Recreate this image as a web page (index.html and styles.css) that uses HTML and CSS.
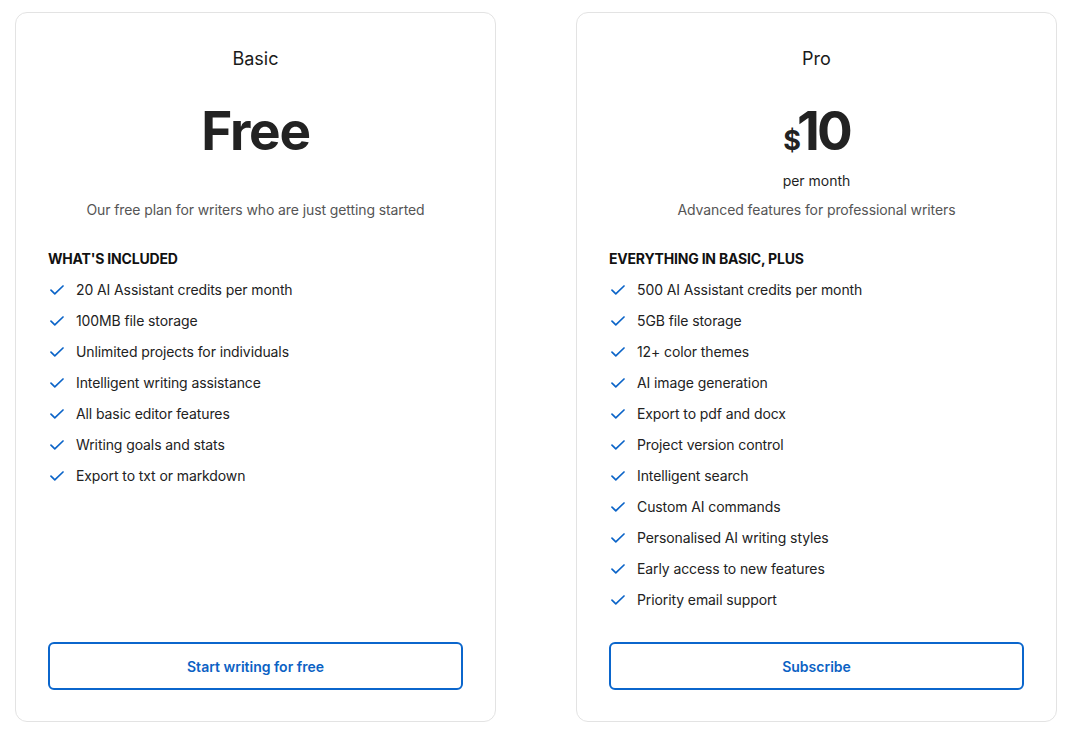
FILE: index.html
```html
<!DOCTYPE html>
<html lang="en">
<head>
<meta charset="utf-8">
<title>Pricing</title>
<link rel="stylesheet" href="styles.css">
</head>
<body>
<div class="plans">
  <section class="card">
    <h2 class="plan-name">Basic</h2>
    <div class="price-block">
      <div class="price"><span class="amount">Free</span></div>
    </div>
    <p class="desc">Our free plan for writers who are just getting started</p>
    <h3 class="list-title">WHAT'S INCLUDED</h3>
    <ul class="features">
      <li><svg class="check" viewBox="0 0 14 10"><path d="M1 5.2 L4.8 8.8 L13 1"/></svg>20 AI Assistant credits per month</li>
      <li><svg class="check" viewBox="0 0 14 10"><path d="M1 5.2 L4.8 8.8 L13 1"/></svg>100MB file storage</li>
      <li><svg class="check" viewBox="0 0 14 10"><path d="M1 5.2 L4.8 8.8 L13 1"/></svg>Unlimited projects for individuals</li>
      <li><svg class="check" viewBox="0 0 14 10"><path d="M1 5.2 L4.8 8.8 L13 1"/></svg>Intelligent writing assistance</li>
      <li><svg class="check" viewBox="0 0 14 10"><path d="M1 5.2 L4.8 8.8 L13 1"/></svg>All basic editor features</li>
      <li><svg class="check" viewBox="0 0 14 10"><path d="M1 5.2 L4.8 8.8 L13 1"/></svg>Writing goals and stats</li>
      <li><svg class="check" viewBox="0 0 14 10"><path d="M1 5.2 L4.8 8.8 L13 1"/></svg>Export to txt or markdown</li>
    </ul>
    <button class="btn">Start writing for free</button>
  </section>
  <section class="card">
    <h2 class="plan-name">Pro</h2>
    <div class="price-block">
      <div class="price"><span class="currency">$</span><span class="amount amount-num">10</span></div>
      <div class="period">per month</div>
    </div>
    <p class="desc">Advanced features for professional writers</p>
    <h3 class="list-title">EVERYTHING IN BASIC, PLUS</h3>
    <ul class="features">
      <li><svg class="check" viewBox="0 0 14 10"><path d="M1 5.2 L4.8 8.8 L13 1"/></svg>500 AI Assistant credits per month</li>
      <li><svg class="check" viewBox="0 0 14 10"><path d="M1 5.2 L4.8 8.8 L13 1"/></svg>5GB file storage</li>
      <li><svg class="check" viewBox="0 0 14 10"><path d="M1 5.2 L4.8 8.8 L13 1"/></svg>12+ color themes</li>
      <li><svg class="check" viewBox="0 0 14 10"><path d="M1 5.2 L4.8 8.8 L13 1"/></svg>AI image generation</li>
      <li><svg class="check" viewBox="0 0 14 10"><path d="M1 5.2 L4.8 8.8 L13 1"/></svg>Export to pdf and docx</li>
      <li><svg class="check" viewBox="0 0 14 10"><path d="M1 5.2 L4.8 8.8 L13 1"/></svg>Project version control</li>
      <li><svg class="check" viewBox="0 0 14 10"><path d="M1 5.2 L4.8 8.8 L13 1"/></svg>Intelligent search</li>
      <li><svg class="check" viewBox="0 0 14 10"><path d="M1 5.2 L4.8 8.8 L13 1"/></svg>Custom AI commands</li>
      <li><svg class="check" viewBox="0 0 14 10"><path d="M1 5.2 L4.8 8.8 L13 1"/></svg>Personalised AI writing styles</li>
      <li><svg class="check" viewBox="0 0 14 10"><path d="M1 5.2 L4.8 8.8 L13 1"/></svg>Early access to new features</li>
      <li><svg class="check" viewBox="0 0 14 10"><path d="M1 5.2 L4.8 8.8 L13 1"/></svg>Priority email support</li>
    </ul>
    <button class="btn">Subscribe</button>
  </section>
</div>
</body>
</html>
```
FILE: styles.css
```css
* { box-sizing: border-box; }
html, body { margin: 0; padding: 0; background: #fff; }
body {
  font-family: Inter, "Noto Sans", sans-serif;
  color: #1f1f1f;
  -webkit-font-smoothing: antialiased;
}
.plans {
  display: flex;
  gap: 80px;
  padding: 12px 0 0 15px;
}
.card {
  flex: 0 0 481px;
  height: 710px;
  border: 1px solid #e3e3e3;
  border-radius: 12px;
  padding: 34px 32px 31px;
  display: flex;
  flex-direction: column;
}
.plan-name {
  margin: 0;
  text-align: center;
  font-size: 18px;
  line-height: 24px;
  font-weight: 400;
  color: #1a1a1a;
}
.price-block {
  margin-top: 33px;
  height: 87px;
  text-align: center;
}
.price {
  height: 54px;
  line-height: 54px;
  display: flex;
  justify-content: center;
  align-items: baseline;
}
.amount {
  font-size: 53px;
  font-weight: 700;
  letter-spacing: -1.2px;
  color: #222;
}
.amount-num {
  letter-spacing: -3px;
}
.currency {
  font-size: 27px;
  font-weight: 700;
  color: #222;
  letter-spacing: -4px;
}
.period {
  margin-top: 13px;
  font-size: 14px;
  line-height: 20px;
  color: #1f1f1f;
}
.desc {
  margin: 9px 0 0;
  text-align: center;
  font-size: 14px;
  line-height: 20px;
  letter-spacing: -0.1px;
  color: #555;
}
.list-title {
  margin: 29px 0 0;
  font-size: 14px;
  line-height: 20px;
  font-weight: 700;
  color: #111;
  letter-spacing: -0.2px;
}
.features {
  list-style: none;
  margin: 5px 0 0;
  padding: 0;
}
.features li {
  display: flex;
  align-items: center;
  height: 31px;
  font-size: 14px;
  letter-spacing: -0.1px;
  color: #222;
}
.check {
  width: 14px;
  height: 10px;
  margin: 0 12px 0 2px;
  flex: none;
}
.check path {
  fill: none;
  stroke: #0b64c8;
  stroke-width: 1.7;
  stroke-linecap: round;
  stroke-linejoin: round;
}
.btn {
  margin-top: auto;
  height: 48px;
  width: 100%;
  background: #fff;
  border: 2px solid #0b66cc;
  border-radius: 6px;
  color: #0b62c4;
  font-family: inherit;
  font-size: 14px;
  font-weight: 600;
  cursor: pointer;
}
```
